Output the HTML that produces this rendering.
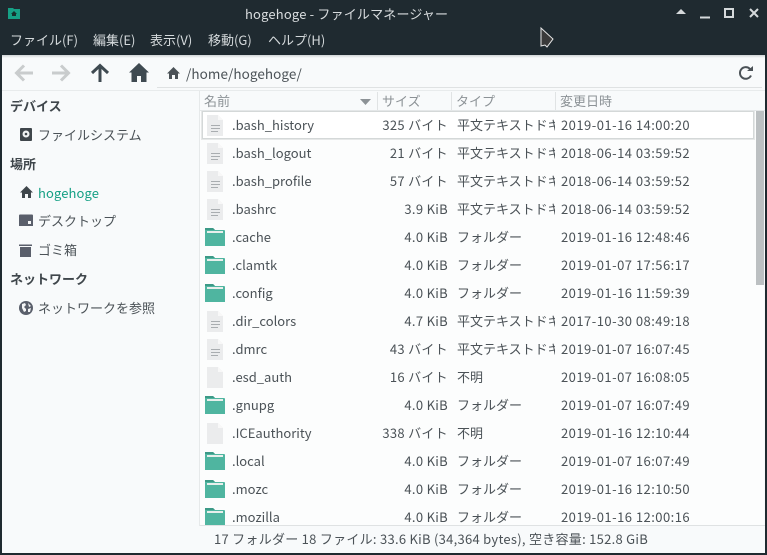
<!DOCTYPE html>
<html lang="ja"><head><meta charset="utf-8"><title>hogehoge - ファイルマネージャー</title>
<style>
html,body{margin:0;padding:0}
body{width:767px;height:555px;overflow:hidden;position:relative;background:#1f2a30;font-family:"Noto Sans CJK JP","Liberation Sans",sans-serif;font-size:13px;color:#4b5257}
.a{position:absolute;white-space:nowrap;line-height:18px}
.win{position:absolute;left:2px;top:55px;width:763px;height:498px;background:#f8fafb;overflow:hidden}
#list{position:absolute;left:200px;top:111px;width:564px;height:414px;background:#fcfdfd;overflow:hidden}
.r{position:absolute;left:0;width:556px;height:28px}
.r span{position:absolute;top:5px;line-height:18px;white-space:nowrap}
.n{left:32px}
.s{right:308px;text-align:right;letter-spacing:.3px}
.t{left:257px;width:98px;overflow:hidden}
.d{left:361px;letter-spacing:.47px}
.r svg{position:absolute;left:4px;top:1px}
.m{color:#d5dadc;top:31px}
.h{color:#8c9296;top:92px}
.sec{font-weight:700;color:#3f464b;left:10px}
</style></head><body>
<svg width="0" height="0" style="position:absolute"><defs>
<symbol id="doc" viewBox="0 0 24 24"><path d="M3 3h11l5 5v16H3z" fill="#ebeced"/><path d="M14 3l5 5h-5z" fill="#f8f8f8"/><path d="M7 13.500h9M7 16.500h9M7 19.500h7" stroke="#a9adb0" stroke-width="1" fill="none"/></symbol>
<symbol id="unk" viewBox="0 0 24 24"><path d="M3 3h11l5 5v16H3z" fill="#ebeced"/><path d="M14 3l5 5h-5z" fill="#f8f8f8"/></symbol>
<symbol id="dir" viewBox="0 0 24 24"><path d="M1 5a1 1 0 0 1 1-1h7l2 2h9a1 1 0 0 1 1 1v15H1z" fill="#4fb5a0"/><path d="M1 4h8l2 2H1z" fill="#3c9a87"/><rect x="3" y="7" width="16" height="2" fill="#e8efec"/></symbol>
</defs></svg>

<!-- title bar -->
<svg class="a" style="left:7px;top:6px" width="14" height="14" viewBox="0 0 14 14"><path d="M1 2h5l1 1h6v10H1z" fill="#16a085"/><path d="M7 5l3 3H9v2H5V8H4z" fill="#16302c"/></svg>
<div class="a" style="left:245px;top:5px;color:#d8dcde;font-size:13px;letter-spacing:.17px">hogehoge - ファイルマネージャー</div>
<svg class="a" style="left:672px;top:4px" width="90" height="18" viewBox="0 0 90 18" fill="none" stroke="#d5d9db"><path d="M4 10l5-5 5 5z" fill="#d5d9db" stroke="none"/><path d="M28 13.500h10" stroke-width="2"/><rect x="53" y="5" width="8" height="8" stroke-width="2"/><path d="M78 5l8 8M86 5l-8 8" stroke-width="2"/></svg>

<!-- menu -->
<div class="a m" style="left:10px">ファイル(F)</div>
<div class="a m" style="left:93px">編集(E)</div>
<div class="a m" style="left:150px">表示(V)</div>
<div class="a m" style="left:208px">移動(G)</div>
<div class="a m" style="left:268px">ヘルプ(H)</div>
<svg class="a" style="left:539px;top:26px" width="16" height="23" viewBox="0 0 16 23"><path d="M2 2v18l4-1 2 2 6-8z" fill="#3a3a3a" stroke="#e8e8e8" stroke-width="1"/></svg>

<div class="win"></div>
<div class="a" style="left:2px;top:55px;width:763px;height:3px;background:linear-gradient(#cfd3d5,#f8fafb)"></div>

<!-- toolbar -->
<svg class="a" style="left:14px;top:62px" width="150" height="22" viewBox="0 0 150 22" fill="none" stroke-width="3">
<path d="M19 11H3M10 3.500l-7.500 7.500 7.500 7.500" stroke="#c9cccd"/>
<path d="M38 11h16M47 3.500l7.500 7.500-7.500 7.500" stroke="#c9cccd"/>
<path d="M86 20V4M78 11l8-7.500 8 7.500" stroke="#3f4a51"/>
<path d="M125 1l10 9.500h-2.500V20H127v-6h-4v6h-5.500v-9.500H115z" fill="#3f4a51" stroke="none"/>
</svg>
<svg class="a" style="left:166px;top:66px" width="15" height="14" viewBox="0 0 15 14"><path d="M7.500 1l6.500 6.500h-2V13H9V9H6v4H3V7.500H1z" fill="#4b5257"/></svg>
<div class="a" style="left:186px;top:64px;color:#4b5257;font-size:13.500px;letter-spacing:.07px">/home/hogehoge/</div>
<div class="a" style="left:157px;top:87px;width:605px;height:1px;background:#dfe2e3"></div>
<svg class="a" style="left:738px;top:65px" width="16" height="16" viewBox="0 0 16 16" fill="none"><path d="M13 10.500A5.800 5.800 0 1 1 12 4" stroke="#4b5257" stroke-width="2"/><path d="M9 6h6V1z" fill="#4b5257"/></svg>
<div class="a" style="left:2px;top:90px;width:763px;height:1px;background:#e8ebec"></div>

<!-- sidebar -->
<div class="a sec" style="top:97px">デバイス</div>
<svg class="a" style="left:20px;top:128px" width="12" height="14" viewBox="0 0 12 14"><rect width="12" height="13" rx="1" fill="#3f464b"/><circle cx="6" cy="6" r="3.500" fill="#f0f2f3"/><circle cx="6" cy="6" r="1.300" fill="#3f464b"/></svg>
<div class="a" style="left:38px;top:126px">ファイルシステム</div>
<div class="a sec" style="top:155px">場所</div>
<svg class="a" style="left:19px;top:185px" width="15" height="14" viewBox="0 0 15 14"><path d="M7.500 1l6.500 6.500h-2V13H9V9H6v4H3V7.500H1z" fill="#3f464b"/></svg>
<div class="a" style="left:38px;top:184px;color:#16a085;letter-spacing:.1px">hogehoge</div>
<svg class="a" style="left:19px;top:214px" width="14" height="13" viewBox="0 0 14 13"><path d="M0 1.500a1 1 0 0 1 1-1h12a1 1 0 0 1 1 1V12H0z" fill="#5a5f6b"/><path d="M9 7h3v3H9z" fill="#f4f5f6"/></svg>
<div class="a" style="left:38px;top:212px">デスクトップ</div>
<svg class="a" style="left:19px;top:243px" width="13" height="14" viewBox="0 0 13 14"><path d="M0 1.500h13V3H0zM1 4h11v10H1z" fill="#5a5f6b"/></svg>
<div class="a" style="left:38px;top:241px">ゴミ箱</div>
<div class="a sec" style="top:270px">ネットワーク</div>
<svg class="a" style="left:19px;top:301px" width="14" height="14" viewBox="0 0 14 14"><circle cx="7" cy="7" r="7" fill="#5a5f6b"/><path d="M3 3l3-1 1 2-2 2 2 2v2l-2 1-2-4zM9 2l3 3-2 1zM9 8l3-1-1 4-2 0z" fill="#f4f5f6"/></svg>
<div class="a" style="left:38px;top:299px">ネットワークを参照</div>
<div class="a" style="left:199px;top:91px;width:1px;height:435px;background:#e6e9ea"></div>

<!-- header -->
<div class="a" style="left:200px;top:110px;width:565px;height:1px;background:#e4e7e8"></div>
<div class="a h" style="left:204px">名前</div>
<svg class="a" style="left:360px;top:99px" width="11" height="6"><path d="M0 0h11L5.500 6z" fill="#8c9296"/></svg>
<div class="a h" style="left:382px">サイズ</div>
<div class="a h" style="left:456px">タイプ</div>
<div class="a h" style="left:560px">変更日時</div>
<div class="a" style="left:377px;top:92px;width:1px;height:18px;background:#e0e3e4"></div>
<div class="a" style="left:451px;top:92px;width:1px;height:18px;background:#e0e3e4"></div>
<div class="a" style="left:555px;top:92px;width:1px;height:18px;background:#e0e3e4"></div>

<!-- list -->
<div id="list">
<div class="r" style="top:0;left:2px;width:550px;height:26px;border:1px solid #d4d8d8;outline:1px solid #e6e8e8;background:#fff"></div>
<div class="r" style="top:0"><svg width="24" height="24"><use href="#doc"/></svg><span class="n">.bash_history</span><span class="s">325 バイト</span><span class="t">平文テキストドキュメント</span><span class="d">2019-01-16 14:00:20</span></div>
<div class="r" style="top:28px"><svg width="24" height="24"><use href="#doc"/></svg><span class="n">.bash_logout</span><span class="s">21 バイト</span><span class="t">平文テキストドキュメント</span><span class="d">2018-06-14 03:59:52</span></div>
<div class="r" style="top:56px"><svg width="24" height="24"><use href="#doc"/></svg><span class="n">.bash_profile</span><span class="s">57 バイト</span><span class="t">平文テキストドキュメント</span><span class="d">2018-06-14 03:59:52</span></div>
<div class="r" style="top:84px"><svg width="24" height="24"><use href="#doc"/></svg><span class="n">.bashrc</span><span class="s">3.9 KiB</span><span class="t">平文テキストドキュメント</span><span class="d">2018-06-14 03:59:52</span></div>
<div class="r" style="top:112px"><svg width="24" height="24"><use href="#dir"/></svg><span class="n">.cache</span><span class="s">4.0 KiB</span><span class="t">フォルダー</span><span class="d">2019-01-16 12:48:46</span></div>
<div class="r" style="top:140px"><svg width="24" height="24"><use href="#dir"/></svg><span class="n">.clamtk</span><span class="s">4.0 KiB</span><span class="t">フォルダー</span><span class="d">2019-01-07 17:56:17</span></div>
<div class="r" style="top:168px"><svg width="24" height="24"><use href="#dir"/></svg><span class="n">.config</span><span class="s">4.0 KiB</span><span class="t">フォルダー</span><span class="d">2019-01-16 11:59:39</span></div>
<div class="r" style="top:196px"><svg width="24" height="24"><use href="#doc"/></svg><span class="n">.dir_colors</span><span class="s">4.7 KiB</span><span class="t">平文テキストドキュメント</span><span class="d">2017-10-30 08:49:18</span></div>
<div class="r" style="top:224px"><svg width="24" height="24"><use href="#doc"/></svg><span class="n">.dmrc</span><span class="s">43 バイト</span><span class="t">平文テキストドキュメント</span><span class="d">2019-01-07 16:07:45</span></div>
<div class="r" style="top:252px"><svg width="24" height="24"><use href="#unk"/></svg><span class="n">.esd_auth</span><span class="s">16 バイト</span><span class="t">不明</span><span class="d">2019-01-07 16:08:05</span></div>
<div class="r" style="top:280px"><svg width="24" height="24"><use href="#dir"/></svg><span class="n">.gnupg</span><span class="s">4.0 KiB</span><span class="t">フォルダー</span><span class="d">2019-01-07 16:07:49</span></div>
<div class="r" style="top:308px"><svg width="24" height="24"><use href="#unk"/></svg><span class="n">.ICEauthority</span><span class="s">338 バイト</span><span class="t">不明</span><span class="d">2019-01-16 12:10:44</span></div>
<div class="r" style="top:336px"><svg width="24" height="24"><use href="#dir"/></svg><span class="n">.local</span><span class="s">4.0 KiB</span><span class="t">フォルダー</span><span class="d">2019-01-07 16:07:49</span></div>
<div class="r" style="top:364px"><svg width="24" height="24"><use href="#dir"/></svg><span class="n">.mozc</span><span class="s">4.0 KiB</span><span class="t">フォルダー</span><span class="d">2019-01-16 12:10:50</span></div>
<div class="r" style="top:392px"><svg width="24" height="24"><use href="#dir"/></svg><span class="n">.mozilla</span><span class="s">4.0 KiB</span><span class="t">フォルダー</span><span class="d">2019-01-16 12:00:16</span></div>
<div style="position:absolute;left:556px;top:0;width:8px;height:174px;background:#bcc0c2"></div>
</div>

<!-- status -->
<div class="a" style="left:200px;top:525px;width:565px;height:1px;background:#dfe2e3"></div>
<div class="a" style="left:214px;top:530px;letter-spacing:.27px">17 フォルダー 18 ファイル: 33.6 KiB (34,364 bytes), 空き容量: 152.8 GiB</div>
</body></html>
